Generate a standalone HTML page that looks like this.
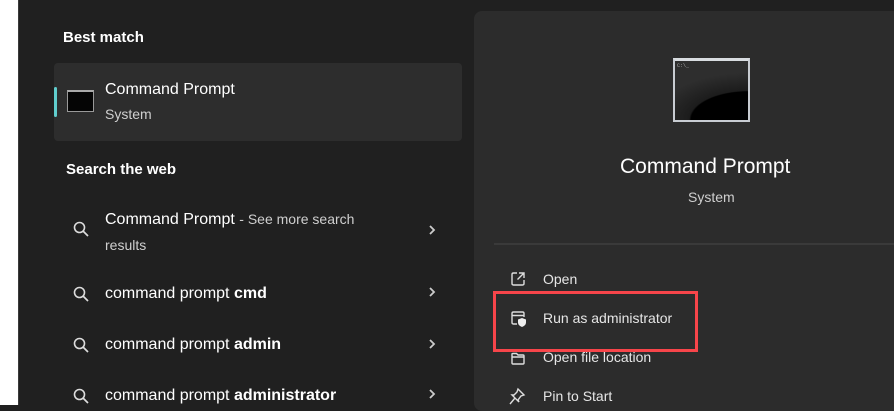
<!DOCTYPE html>
<html><head><meta charset="utf-8"><style>
*{margin:0;padding:0;box-sizing:border-box}
body{width:894px;height:405px;overflow:hidden;background:#202020;font-family:"Segoe UI","Liberation Sans",sans-serif;color:#fff;position:relative}
.a{position:absolute;white-space:nowrap}
.h{font-weight:bold;font-size:15px}
.t{font-size:16px}
.s{font-size:14px;color:#cfcfcf}
.b{font-weight:bold}
svg{position:absolute}
</style></head><body>
<div class="a" style="left:0;top:0;width:18px;height:405px;background:#fff"></div>
<div class="a" style="left:18px;top:0;width:1px;height:405px;background:#3a3a3a"></div>
<div class="a h" style="left:63px;top:29px">Best match</div>
<div class="a" style="left:54px;top:63px;width:408px;height:78px;background:#2d2d2d;border-radius:4px"></div>
<div class="a" style="left:54px;top:87px;width:3px;height:30px;background:#60cdcd;border-radius:2px"></div>
<div class="a" style="left:67px;top:90px;width:27px;height:22px;background:#050505;border:1px solid #999;border-top:2px solid #aaa"></div>
<div class="a t" style="left:105px;top:81px">Command Prompt</div>
<div class="a s" style="left:105px;top:106px">System</div>
<div class="a h" style="left:66px;top:161px">Search the web</div>

<svg width="0" height="0"><defs><g id="q"><circle cx="6.5" cy="6.5" r="5" fill="none" stroke="#ddd" stroke-width="1.6"/><path d="M10 10L15 15" stroke="#ddd" stroke-width="1.7"/></g><g id="c"><path d="M2 2L6 6L2 10" fill="none" stroke="#ccc" stroke-width="1.8"/></g></defs></svg>

<svg style="left:73px;top:221px" width="16" height="16"><use href="#q"/></svg>
<div class="a t" style="left:105px;top:211px">Command Prompt <span style="font-size:14px;color:#cfcfcf">- See more search</span></div>
<div class="a s" style="left:105px;top:237px">results</div>
<svg style="left:428px;top:224px" width="10" height="14"><use href="#c"/></svg>

<svg style="left:73px;top:286px" width="16" height="16"><use href="#q"/></svg>
<div class="a t" style="left:105px;top:285px">command prompt <span class="b">cmd</span></div>
<svg style="left:428px;top:286px" width="10" height="14"><use href="#c"/></svg>

<svg style="left:73px;top:337px" width="16" height="16"><use href="#q"/></svg>
<div class="a t" style="left:105px;top:336px">command prompt <span class="b">admin</span></div>
<svg style="left:428px;top:338px" width="10" height="14"><use href="#c"/></svg>

<svg style="left:73px;top:388px" width="16" height="16"><use href="#q"/></svg>
<div class="a t" style="left:105px;top:387px">command prompt <span class="b">administrator</span></div>
<svg style="left:428px;top:388px" width="10" height="14"><use href="#c"/></svg>

<div class="a" style="left:474px;top:11px;width:430px;height:400px;background:#2c2c2c;border-radius:8px"></div>
<div class="a" style="left:673px;top:58px;width:77px;height:64px;background:radial-gradient(ellipse 130% 80% at 100% 100%,#000 60%,#1c1c1c 62%,#2e2e2e 100%);border:2px solid #c8ccd2;border-top:3px solid #d8dce0"></div>
<div class="a" style="left:677px;top:63px;font-size:5px;color:#aaa;font-family:'Liberation Mono',monospace">C:\_</div>
<div class="a" style="left:620px;top:155px;font-size:21px">Command Prompt</div>
<div class="a s" style="left:688px;top:189px">System</div>
<div class="a" style="left:494px;top:243px;width:400px;height:2px;background:#3a3a3a"></div>

<svg style="left:509px;top:270px" width="18" height="18"><path d="M8 3H4.5Q3 3 3 4.5V13.5Q3 15 4.5 15H13.5Q15 15 15 13.5V10M10 3H15V8M15 3L8.5 9.5" fill="none" stroke="#ddd" stroke-width="1.4"/></svg>
<div class="a s" style="left:543px;top:271px;color:#e6e6e6">Open</div>
<svg style="left:509px;top:309px" width="18" height="18"><path d="M8 15H4.5Q3 15 3 13.5V4.5Q3 3 4.5 3H13.5Q15 3 15 4.5V8M3 6.5H15" fill="none" stroke="#ddd" stroke-width="1.4"/><path d="M13 9L17 10.5V13.5Q17 16.5 13 18Q9 16.5 9 13.5V10.5Z" fill="#eee"/></svg>
<div class="a s" style="left:543px;top:310px;color:#e6e6e6">Run as administrator</div>
<svg style="left:509px;top:349px" width="18" height="18"><path d="M3 5V14Q3 15 4 15H14Q15 15 15 14V7Q15 6 14 6H9L7.5 4.5H4Q3 4.5 3 5ZM3 8H15" fill="none" stroke="#ddd" stroke-width="1.4"/></svg>
<div class="a s" style="left:543px;top:349px;color:#e6e6e6">Open file location</div>
<svg style="left:507px;top:387px" width="20" height="18"><path d="M11 2L17 8L14 9L11 13L12 15L5 8L7 8L10 5ZM8 11L3 17" fill="none" stroke="#ddd" stroke-width="1.4"/></svg>
<div class="a s" style="left:543px;top:388px;color:#e6e6e6">Pin to Start</div>

<div class="a" style="left:493px;top:291px;width:205px;height:61px;border:3px solid #f7454a"></div>
</body></html>
